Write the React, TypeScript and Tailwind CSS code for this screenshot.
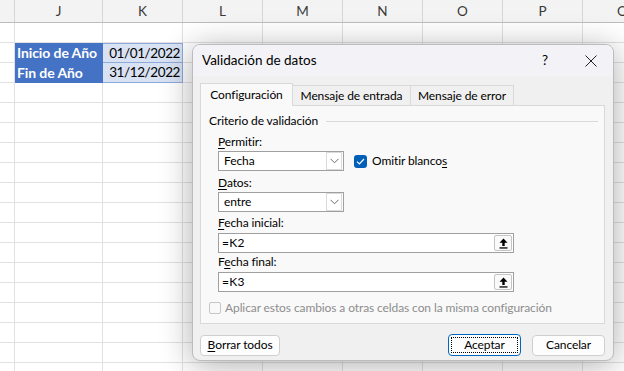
import React from "react";

const cols = [
  { name: "", w: "w-[15px]" },
  { name: "J", w: "w-[88px]" },
  { name: "K", w: "w-[80px]" },
  { name: "L", w: "w-[80px]" },
  { name: "M", w: "w-[80px]" },
  { name: "N", w: "w-[80px]" },
  { name: "O", w: "w-[80px]" },
  { name: "P", w: "w-[80px]" },
  { name: "Q", w: "w-[80px]" },
];

const rows = Array.from({ length: 18 }, (_, i) => i);

const Chevron = () => (
  <svg width="9" height="6" viewBox="0 0 9 6" fill="none">
    <path d="M0.5 0.8 L4.5 4.8 L8.5 0.8" stroke="#6b6b6b" strokeWidth="1" />
  </svg>
);

const Select = ({ value }: { value: string }) => (
  <div className="flex h-[20px] w-[126px] items-center border border-[#a0a0a0] bg-white">
    <span className="flex-1 pl-[5px] leading-none text-black">{value}</span>
    <div className="mr-[1px] flex h-[18px] w-[16px] items-center justify-center border border-[#dadada] bg-white">
      <Chevron />
    </div>
  </div>
);

const RefInput = ({ value }: { value: string }) => (
  <div className="flex h-[20px] w-[296px] items-center border border-[#a0a0a0] bg-white">
    <span className="flex-1 pl-[3px] leading-none tracking-[0.3px] text-black">{value}</span>
    <div className="mr-[1px] flex h-[16px] w-[18px] items-center justify-center rounded-[2px] border border-[#c4c4c4] bg-[#fafafa]">
      <svg width="9" height="11" viewBox="0 0 9 11">
        <path d="M4.5 0.5 L8.5 4.8 L5.7 4.8 L5.7 8 L3.3 8 L3.3 4.8 L0.5 4.8 Z" fill="#000" />
        <rect x="0.5" y="9.3" width="8" height="1.3" fill="#000" />
      </svg>
    </div>
  </div>
);

const Label = ({ first, rest }: { first: string; rest: string }) => (
  <div className="h-[16px] leading-[16px] text-black">
    <span className="underline underline-offset-2">{first}</span>
    {rest}
  </div>
);

const App: React.FC = () => {
  return (
    <div
      className="relative h-[371px] w-[624px] overflow-hidden bg-white"
      style={{ fontFamily: 'Lato, "Noto Sans", sans-serif' }}
    >
      {/* column headers */}
      <div className="flex h-[23px] border-b border-[#bdbdbd] bg-[#f3f3f3]">
        {cols.map((c, i) => (
          <div
            key={i}
            className={`${c.w} flex shrink-0 items-center justify-center border-r border-[#d6d6d6] text-[13.5px] text-[#3a3a3a]`}
          >
            {c.name}
          </div>
        ))}
      </div>

      {/* grid */}
      {rows.map((r) => (
        <div key={r} className="flex h-[20px]">
          {cols.map((c, i) => {
            let extra = "border-r border-b border-[#e1e1e1]";
            let content: React.ReactNode = null;
            if ((r === 1 || r === 2) && i === 1) {
              extra = "border-r border-b border-[#4472c4] bg-[#4472c4]";
              content = (
                <span className="pl-[2px] text-[14px] font-bold tracking-[-0.1px] text-white">
                  {r === 1 ? "Inicio de Año" : "Fin de Año"}
                </span>
              );
            }
            if ((r === 1 || r === 2) && i === 2) {
              extra = `border-r border-b border-[#8eaadb] bg-[#d9e2f3] justify-end ${r === 1 ? "border-t" : ""}`;
              content = (
                <span className="pr-[2px] text-[13.5px] tracking-[-0.4px] text-black">
                  {r === 1 ? "01/01/2022" : "31/12/2022"}
                </span>
              );
            }
            return (
              <div key={i} className={`${c.w} flex shrink-0 items-center ${extra}`}>
                {content}
              </div>
            );
          })}
        </div>
      ))}

      {/* dialog */}
      <div className="absolute left-[192px] top-[44px] flex h-[317px] w-[422px] flex-col overflow-hidden rounded-[8px] border border-[#bcbcbc] bg-[#f0f0f0] text-[12px] tracking-[-0.1px] shadow-[0_4px_32px_rgba(0,0,0,0.32)]">
        <div className="flex h-[31px] items-center bg-[#f3f3f7] pl-[9px] pr-[16px]">
          <span className="flex-1 text-[13.5px] tracking-normal text-black">Validación de datos</span>
          <span className="mr-[37px] text-[13.5px] text-black">?</span>
          <svg width="12" height="12" viewBox="0 0 12 12">
            <path d="M0.5 0.5 L11.5 11.5 M11.5 0.5 L0.5 11.5" stroke="#222" strokeWidth="1" />
          </svg>
        </div>

        <div className="flex flex-col px-[7px] pt-[7px]">
          {/* tabs */}
          <div className="flex h-[22px] items-end">
            <div className="relative z-10 -mb-[1px] flex h-[23px] w-[93px] items-center justify-center border border-b-0 border-[#d9d9d9] bg-[#f9f9f9] text-black">
              Configuración
            </div>
            <div className="flex h-[20px] w-[118px] items-center justify-center border border-l-0 border-b-0 border-[#d9d9d9] bg-[#f0f0f0] text-black">
              Mensaje de entrada
            </div>
            <div className="flex h-[20px] w-[103px] items-center justify-center border border-l-0 border-b-0 border-[#d9d9d9] bg-[#f0f0f0] text-black">
              Mensaje de error
            </div>
          </div>

          {/* panel */}
          <div className="flex h-[219px] w-[405px] flex-col border border-[#d9d9d9] bg-[#f9f9f9] pl-[8px] pr-[6px]">
            <div className="mt-[7px] flex h-[16px] items-center gap-[8px]">
              <span className="leading-[16px] text-black">Criterio de validación</span>
              <div className="h-[1px] flex-1 bg-[#d9d9d9]" />
            </div>

            <div className="flex flex-col pl-[9px]">
              <div className="mt-[5px]">
                <Label first="P" rest="ermitir:" />
              </div>
              <div className="mt-[1px] flex items-center gap-[10px]">
                <Select value="Fecha" />
                <div className="flex items-center gap-[5px]">
                  <div className="flex h-[13px] w-[13px] items-center justify-center rounded-[3px] bg-[#005fb8]">
                    <svg width="9" height="7" viewBox="0 0 9 7">
                      <path d="M1 3.6 L3.4 6 L8 1" stroke="#fff" strokeWidth="1.2" fill="none" />
                    </svg>
                  </div>
                  <span className="text-black">
                    Omitir blanco<span className="underline underline-offset-2">s</span>
                  </span>
                </div>
              </div>
              <div className="mt-[4px]">
                <Label first="D" rest="atos:" />
              </div>
              <div className="mt-[1px]">
                <Select value="entre" />
              </div>
              <div className="mt-[3px]">
                <Label first="F" rest="echa inicial:" />
              </div>
              <div className="mt-[2px]">
                <RefInput value="=K2" />
              </div>
              <div className="mt-[1px] h-[16px] leading-[16px] text-black">
                F<span className="underline underline-offset-2">e</span>cha final:
              </div>
              <div className="mt-[2px]">
                <RefInput value="=K3" />
              </div>
            </div>

            <div className="mt-[8px] flex h-[16px] items-center gap-[4px]">
              <div className="h-[12px] w-[12px] rounded-[2px] border border-[#c6c6c6] bg-[#f9f9f9]" />
              <span className="text-[#8d8d8d]">
                Aplicar estos cambios a otras celdas con la misma configuración
              </span>
            </div>
          </div>

          {/* buttons */}
          <div className="mt-[10px] flex items-center">
            <div className="flex h-[21px] w-[80px] items-center justify-center rounded-[4px] border border-[#cfcfcf] bg-[#fdfdfd] text-black">
              <span className="underline underline-offset-2">B</span>orrar todos
            </div>
            <div className="flex-1" />
            <div className="flex h-[22px] w-[73px] items-center justify-center rounded-[4px] border border-[#0067c0] bg-[#fdfdfd] p-[2px]">
              <div className="flex h-full w-full items-center justify-center border border-dotted border-black text-black">
                Aceptar
              </div>
            </div>
            <div className="ml-[11px] mr-[1px] flex h-[21px] w-[73px] items-center justify-center rounded-[4px] border border-[#cfcfcf] bg-[#fdfdfd] text-black">
              Cancelar
            </div>
          </div>
        </div>
      </div>
    </div>
  );
};

export default App;
